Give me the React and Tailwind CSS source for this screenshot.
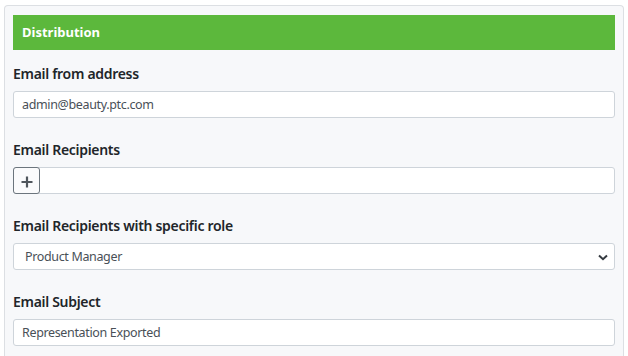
import React from 'react';

const font = { fontFamily: '"Noto Sans", "Open Sans", Arial, sans-serif' };

function Label({ children }) {
  return (
    <div className="pt-px text-[14px] leading-[20px] font-semibold tracking-[-0.3px] text-[#212529] mb-[7px]">{children}</div>
  );
}

function TextBox({ value }) {
  return (
    <div className="h-[27px] bg-white border border-[#ced4da] rounded-[3px] flex items-center pt-[2px] px-[8px] text-[12.5px] tracking-[-0.35px] text-[#495057]">
      {value}
    </div>
  );
}

export default function App() {
  return (
    <div className="w-[628px] h-[356px] bg-white pt-[5px] px-[4px] overflow-hidden" style={font}>
      <div className="h-full bg-[#f7f8fa] border border-[#dcdfe3] border-b-0 rounded-t-[4px] pt-[9px] px-[8px]">
        <div className="h-[35px] bg-[#5cb83c] flex items-center pt-px px-[9px] text-white text-[13px] font-bold">
          Distribution
        </div>

        <div className="mt-[13px]">
          <Label>Email from address</Label>
          <TextBox value="admin@beauty.ptc.com" />
        </div>

        <div className="mt-[21px]">
          <Label>Email Recipients</Label>
          <div className="h-[27px] bg-white border border-[#ced4da] rounded-[3px] flex">
            <button className="w-[27px] h-[27px] -mt-px -ml-px border border-[#6c757d] rounded-[3px] bg-[#fbfbfc] flex items-center justify-center">
              <svg width="12" height="12" viewBox="0 0 12 12" className="mt-[2px]">
                <path d="M6 0.5V11.5M0.5 6H11.5" stroke="#50565c" strokeWidth="2.2" />
              </svg>
            </button>
          </div>
        </div>

        <div className="mt-[21px]">
          <Label>Email Recipients with specific role</Label>
          <div className="h-[27px] bg-white border border-[#ced4da] rounded-[3px] flex items-center justify-between pt-[2px] pl-[11px] pr-[6px] text-[12.5px] tracking-[-0.35px] text-[#495057]">
            <span>Product Manager</span>
            <svg width="10" height="7" viewBox="0 0 10 7" className="-mt-[1px]">
              <path d="M1 1.5L5 5.2L9 1.5" fill="none" stroke="#343a40" strokeWidth="2" />
            </svg>
          </div>
        </div>

        <div className="mt-[21px]">
          <Label>Email Subject</Label>
          <TextBox value="Representation Exported" />
        </div>
      </div>
    </div>
  );
}
